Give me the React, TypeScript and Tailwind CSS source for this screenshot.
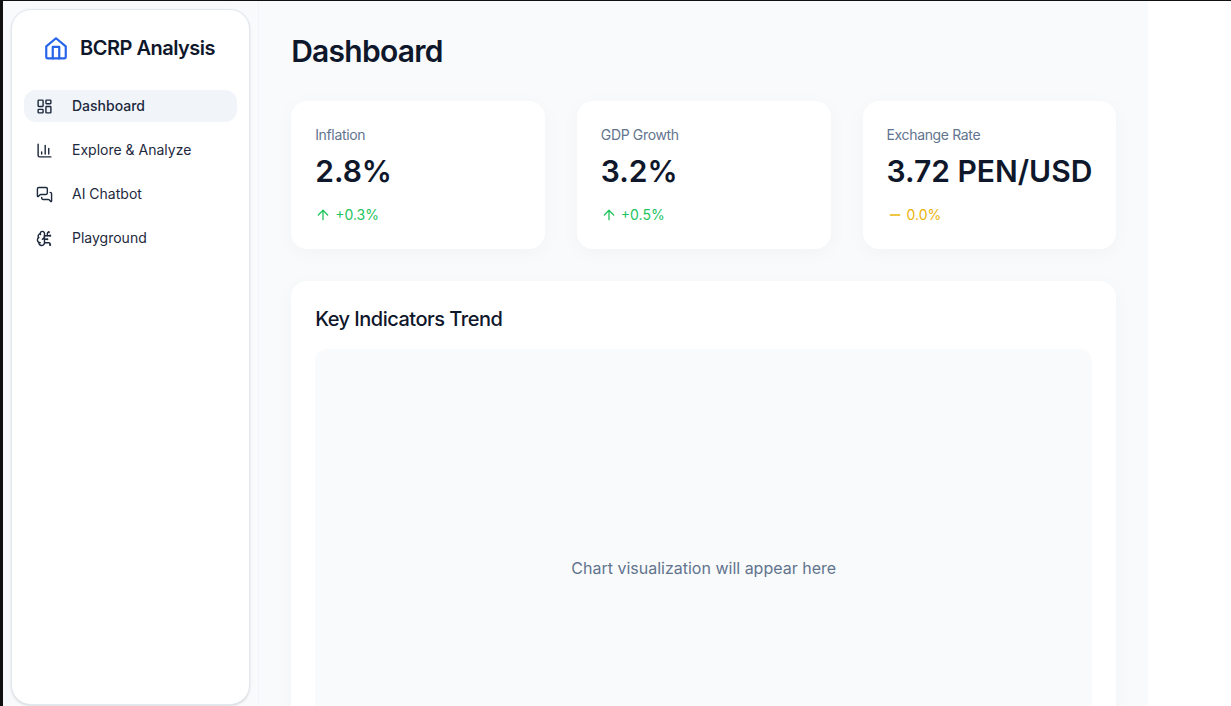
import { FC, ReactNode } from "react"
import {
  ArrowUp,
  BrainCircuit,
  ChartColumn,
  LayoutDashboard,
  MessagesSquare,
  Minus,
} from "lucide-react"

type NavItem = {
  label: string
  icon: ReactNode
  active?: boolean
}

const navItems: NavItem[] = [
  { label: "Dashboard", icon: <LayoutDashboard size={17} />, active: true },
  { label: "Explore & Analyze", icon: <ChartColumn size={17} /> },
  { label: "AI Chatbot", icon: <MessagesSquare size={17} /> },
  { label: "Playground", icon: <BrainCircuit size={17} /> },
]

type Stat = {
  label: string
  value: string
  change: string
  flat?: boolean
}

const stats: Stat[] = [
  { label: "Inflation", value: "2.8%", change: "+0.3%" },
  { label: "GDP Growth", value: "3.2%", change: "+0.5%" },
  { label: "Exchange Rate", value: "3.72 PEN/USD", change: "0.0%", flat: true },
]

const HomeLogo = () => (
  <svg
    width="26"
    height="26"
    viewBox="0 0 24 24"
    fill="none"
    stroke="#2563eb"
    strokeWidth="2"
    strokeLinecap="round"
    strokeLinejoin="round"
  >
    <path d="M3 10.5 12 3l9 7.5V20a1.5 1.5 0 0 1-1.5 1.5h-15A1.5 1.5 0 0 1 3 20z" />
    <path d="M9 21.5V11h6v10.5" />
  </svg>
)

const StatCard: FC<Stat> = ({ label, value, change, flat }) => (
  <div className="rounded-2xl bg-white p-6 shadow-[0_4px_20px_rgba(0,0,0,0.03)]">
    <p className="text-sm tracking-tight text-slate-500">{label}</p>
    <p className="mt-2 text-3xl font-semibold whitespace-nowrap text-slate-900">{value}</p>
    <div
      className={`mt-4 flex items-center gap-1 text-sm ${
        flat ? "text-[#eab308]" : "text-[#22c55e]"
      }`}
    >
      {flat ? <Minus size={16} /> : <ArrowUp size={16} />}
      <span>{change}</span>
    </div>
  </div>
)

const App = () => {
  return (
    <div className="flex h-screen overflow-hidden border-t border-l-[3px] border-t-[#111111] border-l-[#111111] bg-white font-['Inter',sans-serif]">
      <aside className="w-[256.2px] shrink-0 border-r border-slate-100 bg-[#f9fafb] p-2 pb-px">
        <div className="h-full rounded-[20px] border border-slate-200 bg-white px-3 pt-3 shadow-sm">
          <div className="flex h-[52px] items-center gap-[11px] pl-[19px]">
            <HomeLogo />
            <span className="text-xl font-semibold tracking-tight whitespace-nowrap text-slate-900">
              BCRP Analysis
            </span>
          </div>
          <nav className="mt-4 flex flex-col gap-3">
            {navItems.map((item) => (
              <div
                key={item.label}
                className={`flex h-8 items-center gap-[19px] rounded-xl px-3 text-sm text-slate-800 ${
                  item.active ? "bg-slate-100 font-medium" : ""
                }`}
              >
                <span className="text-slate-800">{item.icon}</span>
                <span>{item.label}</span>
              </div>
            ))}
          </nav>
        </div>
      </aside>
      <main className="w-[889px] shrink-0 bg-[#f9fafb] p-8">
        <h1 className="text-3xl font-semibold tracking-tight text-slate-900">Dashboard</h1>
        <div className="mt-8 grid grid-cols-3 gap-8">
          {stats.map((stat) => (
            <StatCard key={stat.label} {...stat} />
          ))}
        </div>
        <section className="mt-8 rounded-2xl bg-white p-6 shadow-[0_4px_20px_rgba(0,0,0,0.03)]">
          <h2 className="text-xl font-medium tracking-tight text-slate-900">Key Indicators Trend</h2>
          <div className="mt-4 flex h-[438px] items-center justify-center rounded-xl bg-[#f9fafb] text-slate-500">
            Chart visualization will appear here
          </div>
        </section>
      </main>
    </div>
  )
}

export default App
